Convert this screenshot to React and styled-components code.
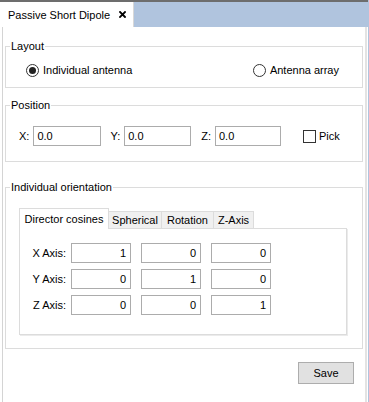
import React from "react";
import styled, { createGlobalStyle } from "styled-components";

const Global = createGlobalStyle`
  html, body { margin: 0; padding: 0; background: #fff; }
  body {
    font-family: "Liberation Sans", Arial, sans-serif;
    font-size: 11px;
    color: #000;
  }
  * { box-sizing: border-box; }
`;

const Page = styled.div`
  width: 369px;
  height: 402px;
  display: flex;
  flex-direction: column;
  border-right: 1px solid #b0c4de;
  overflow: hidden;
`;

const TabBar = styled.div`
  height: 27px;
  flex: none;
  border-top: 2px solid #6d6d6d;
  background: #b0c4de;
  display: flex;
`;

const DocTab = styled.div`
  width: 134px;
  background: #fff;
  border-right: 1px solid #d8d8d8;
  display: flex;
  align-items: center;
  padding-left: 8px;
  gap: 9px;
  line-height: 14px;
`;

const CloseIcon = styled.svg`
  width: 7px;
  height: 7px;
  flex: none;
`;

const Content = styled.div`
  flex: 1;
  margin: 0 1px 0 2px;
  border-left: 1px solid #d4d4d4;
  border-right: 2px solid #e3e3e3;
  padding: 12px 2px 0 2px;
  display: flex;
  flex-direction: column;
`;

const Group = styled.fieldset`
  margin: ${(p) => p.$mt}px 0 0 0;
  padding: 0;
  border: 1px solid #dcdcdc;
  min-width: 0;
`;

const Legend = styled.legend`
  margin-left: 4px;
  padding: 0 1px;
  line-height: 14px;
  font-size: 11px;
`;

const GroupBody = styled.div`
  padding: ${(p) => p.$pad};
`;

const RadioRow = styled.div`
  display: flex;
  justify-content: space-between;
  align-items: center;
  height: 14px;
`;

const Choice = styled.label`
  display: flex;
  align-items: center;
  gap: 4px;
  line-height: 14px;
`;

const RadioMark = styled.span`
  width: 13px;
  height: 13px;
  border: 1px solid #333;
  border-radius: 50%;
  background: #fff;
  display: flex;
  align-items: center;
  justify-content: center;
  &::after {
    content: "";
    width: 7px;
    height: 7px;
    border-radius: 50%;
    background: ${(p) => (p.$checked ? "#222" : "transparent")};
  }
`;

const CheckMark = styled.span`
  width: 13px;
  height: 13px;
  border: 1px solid #333;
  background: #fff;
`;

const PosRow = styled.div`
  display: flex;
  align-items: center;
  height: 20px;
`;

const Pair = styled.div`
  display: flex;
  align-items: center;
  gap: 4px;
  margin-left: ${(p) => p.$ml}px;
`;

const TextBox = styled.div`
  width: ${(p) => p.$w}px;
  height: 20px;
  border: 1px solid #acacac;
  background: #fff;
  padding: 0 4px 0 3px;
  display: flex;
  align-items: center;
  justify-content: ${(p) => (p.$right ? "flex-end" : "flex-start")};
  line-height: 14px;
`;

const PickChoice = styled(Choice)`
  margin-left: 22px;
  gap: 3px;
`;

const TabRow = styled.div`
  display: flex;
  align-items: flex-end;
  height: 21px;
  margin-bottom: -1px;
  position: relative;
  z-index: 1;
`;

const Tab = styled.div`
  width: ${(p) => p.$w}px;
  height: ${(p) => (p.$active ? 21 : 17)}px;
  margin-bottom: ${(p) => (p.$active ? 0 : 1)}px;
  margin-left: ${(p) => (p.$active ? 0 : -1)}px;
  border: 1px solid #dcdcdc;
  border-bottom: none;
  background: ${(p) => (p.$active ? "#fff" : "#f0f0f0")};
  display: flex;
  align-items: center;
  justify-content: center;
  line-height: 14px;
  padding-bottom: ${(p) => (p.$active ? 1 : 0)}px;
  &:first-child { margin-left: 0; }
`;

const Pane = styled.div`
  width: 328px;
  border: 1px solid #dcdcdc;
  box-shadow: 1px 1px 0 #ebebeb;
  padding: 14px 0 19px 0;
  display: flex;
  flex-direction: column;
  gap: 6px;
`;

const AxisRow = styled.div`
  display: flex;
  align-items: center;
  gap: 5px;
`;

const AxisLabel = styled.span`
  width: 46px;
  text-align: right;
`;

const Cells = styled.div`
  display: flex;
  gap: 10px;
`;

const Footer = styled.div`
  display: flex;
  justify-content: flex-end;
  padding: 13px 9px 0 0;
`;

const Button = styled.button`
  width: 56px;
  height: 22px;
  background: #e1e1e1;
  border: 1px solid #adadad;
  border-radius: 0;
  font-family: "Liberation Sans", Arial, sans-serif;
  font-size: 11px;
  color: #000;
  padding: 0;
`;

const matrix = [
  ["X Axis:", [1, 0, 0]],
  ["Y Axis:", [0, 1, 0]],
  ["Z Axis:", [0, 0, 1]],
];

const tabs = [
  { label: "Director cosines", w: 90, active: true },
  { label: "Spherical", w: 54 },
  { label: "Rotation", w: 53 },
  { label: "Z-Axis", w: 41 },
];

export default function App() {
  return (
    <>
      <Global />
      <Page>
        <TabBar>
          <DocTab>
            <span>Passive Short Dipole</span>
            <CloseIcon viewBox="0 0 7 7">
              <path d="M1 1 L6 6 M6 1 L1 6" stroke="#000" strokeWidth="1.8" strokeLinecap="square" />
            </CloseIcon>
          </DocTab>
        </TabBar>
        <Content>
          <Group $mt={0}>
            <Legend>Layout</Legend>
            <GroupBody $pad="10px 23px 10px 20px">
              <RadioRow>
                <Choice>
                  <RadioMark $checked />
                  <span>Individual antenna</span>
                </Choice>
                <Choice>
                  <RadioMark />
                  <span>Antenna array</span>
                </Choice>
              </RadioRow>
            </GroupBody>
          </Group>

          <Group $mt={10}>
            <Legend>Position</Legend>
            <GroupBody $pad="14px 0 15px 13px">
              <PosRow>
                <Pair $ml={0}>
                  <span>X:</span>
                  <TextBox $w={68}>0.0</TextBox>
                </Pair>
                <Pair $ml={9}>
                  <span>Y:</span>
                  <TextBox $w={67}>0.0</TextBox>
                </Pair>
                <Pair $ml={10}>
                  <span>Z:</span>
                  <TextBox $w={66}>0.0</TextBox>
                </Pair>
                <PickChoice>
                  <CheckMark />
                  <span>Pick</span>
                </PickChoice>
              </PosRow>
            </GroupBody>
          </Group>

          <Group $mt={18}>
            <Legend>Individual orientation</Legend>
            <GroupBody $pad="14px 14px 13px 13px">
              <TabRow>
                {tabs.map((t) => (
                  <Tab key={t.label} $w={t.w} $active={t.active}>
                    {t.label}
                  </Tab>
                ))}
              </TabRow>
              <Pane>
                {matrix.map(([label, vals]) => (
                  <AxisRow key={label}>
                    <AxisLabel>{label}</AxisLabel>
                    <Cells>
                      {vals.map((v, i) => (
                        <TextBox key={i} $w={60} $right>
                          {v}
                        </TextBox>
                      ))}
                    </Cells>
                  </AxisRow>
                ))}
              </Pane>
            </GroupBody>
          </Group>

          <Footer>
            <Button>Save</Button>
          </Footer>
        </Content>
      </Page>
    </>
  );
}
